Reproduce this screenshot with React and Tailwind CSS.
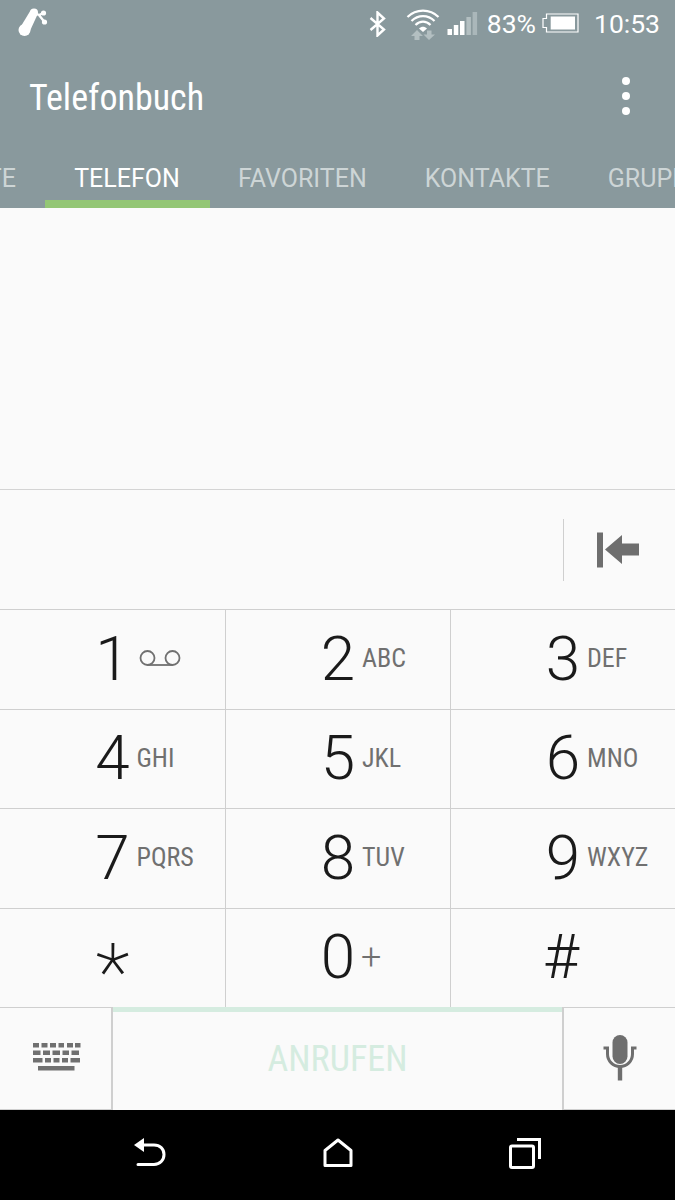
const F = { fontFamily: "Roboto, 'Liberation Sans', sans-serif" };

function Logo() {
  return (
    <svg width="32" height="32" viewBox="0 0 32 32" fill="none" className="block">
      <path d="M16 5 L21 7 L26.5 14 M21 7 L25.5 5" stroke="#fff" strokeWidth="2.4" strokeLinecap="round" />
      <path d="M2.5 19 L12.5 2.5 L19.5 6.5 L11 25 Z" fill="#fff" />
      <circle cx="6.5" cy="22" r="6" fill="#fff" />
      <circle cx="16" cy="4.5" r="4" fill="#fff" />
      <circle cx="25.5" cy="5" r="2.6" fill="#fff" />
      <circle cx="26.5" cy="14" r="2.6" fill="#fff" />
    </svg>
  );
}

function Bluetooth() {
  return (
    <svg width="18" height="26" viewBox="0 0 18 26" fill="none" className="block">
      <path d="M1.5 7 L15 18.5 L8.5 24.5 V1.5 L15 7.5 L1.5 19" stroke="#fff" strokeWidth="2.4" strokeLinejoin="miter" />
    </svg>
  );
}

function Wifi() {
  return (
    <svg width="34" height="34" viewBox="0 0 34 34" fill="none" className="block">
      <path d="M1.5 10 C10 1.5 24 1.5 32.5 10" stroke="#fff" strokeWidth="2.2" />
      <path d="M5.5 14 C12 7.5 22 7.5 28.5 14" stroke="#fff" strokeWidth="2.2" />
      <path d="M9.5 18 C14 13.5 20 13.5 24.5 18" stroke="#fff" strokeWidth="2.2" />
      <path d="M13 21.5 C15.5 19 18.5 19 21 21.5 L17 25 Z" fill="#fff" />
      <path d="M11 23 L17 29 H13.5 V33 H8.5 V29 H5 Z" fill="#b3bfc1" />
      <path d="M23 33 L17.5 27.5 H21 V23.5 H25.5 V27.5 H29 Z" fill="#b3bfc1" />
    </svg>
  );
}

function Signal() {
  return (
    <svg width="31" height="24" viewBox="0 0 31 24" className="block">
      <rect x="0.5" y="17" width="4.5" height="6" fill="#fff" />
      <rect x="6.8" y="13" width="4.5" height="10" fill="#fff" />
      <rect x="13" y="9" width="4.5" height="14" fill="#fff" />
      <rect x="19.4" y="5" width="4.5" height="18" fill="#b3bfc1" />
      <rect x="25.6" y="0" width="4.5" height="23" fill="#aab7ba" />
    </svg>
  );
}

function Battery() {
  return (
    <svg width="37" height="20" viewBox="0 0 37 20" fill="none" className="block">
      <path d="M4.5 1 H36 V19 H4.5 V14.5 H1 V5.5 H4.5 Z" stroke="#fff" strokeWidth="1.2" />
      <rect x="8.7" y="3.5" width="24.3" height="13" fill="#fff" />
    </svg>
  );
}

function Backspace() {
  return (
    <svg width="42" height="36" viewBox="0 0 42 36" className="block">
      <rect x="0" y="0.5" width="6" height="35" fill="#6e6e6e" />
      <path d="M8 17.5 L25 3 V11.5 H42 V23.5 H25 V32 Z" fill="#6e6e6e" />
    </svg>
  );
}

function Voicemail() {
  return (
    <svg width="42" height="18" viewBox="0 0 42 18" fill="none" className="block">
      <circle cx="8.5" cy="9" r="7" stroke="#707070" strokeWidth="1.8" />
      <circle cx="33.5" cy="9" r="7" stroke="#707070" strokeWidth="1.8" />
      <path d="M8.5 16 H33.5" stroke="#707070" strokeWidth="1.8" />
    </svg>
  );
}

function Keyboard() {
  const rows = [
    { y: 0, keys: [[0, 6], [8.5, 6], [17, 6], [25.5, 5.5], [34, 6], [42, 5.5]] },
    { y: 7.5, keys: [[0, 7.5], [10, 7], [19.5, 7.5], [29.5, 6.5], [38.5, 7.5]] },
    { y: 15, keys: [[0, 9.5], [12, 6], [20.5, 6], [29, 6], [37.5, 9.5]] },
  ];
  return (
    <svg width="48" height="28" viewBox="0 0 48 28" className="block">
      {rows.map((r) => r.keys.map(([x, w]) => <rect key={`${r.y}-${x}`} x={x} y={r.y} width={w} height="4.5" fill="#707070" />))}
      <rect x="5" y="23" width="36.5" height="4.5" fill="#707070" />
    </svg>
  );
}

function Mic() {
  return (
    <svg width="34" height="46" viewBox="0 0 34 46" fill="none" className="block">
      <rect x="9.5" y="0" width="15" height="29" rx="7.5" fill="#6e6e6e" />
      <path d="M0.5 13 H4.5 V19 C4.5 26 10 31.5 17 31.5 C24 31.5 29.5 26 29.5 19 V13 H33.5" stroke="#6e6e6e" strokeWidth="3" />
      <rect x="14.8" y="31" width="4.4" height="14.5" fill="#6e6e6e" />
    </svg>
  );
}

function BackNav() {
  return (
    <svg width="34" height="32" viewBox="0 0 34 32" fill="none" className="block">
      <path d="M1 8 L11 1 V15 Z" fill="#fff" />
      <path d="M9 8 H21 C27 8 31 12 31 17.5 C31 23 27 27.5 21 27.5 H5" stroke="#fff" strokeWidth="3" strokeLinecap="round" />
    </svg>
  );
}

function HomeNav() {
  return (
    <svg width="30" height="30" viewBox="0 0 30 30" fill="none" className="block">
      <path d="M2 27.5 V12.5 L15 2 L28 12.5 V27.5 Z" stroke="#fff" strokeWidth="3" strokeLinejoin="round" />
    </svg>
  );
}

function RecentNav() {
  return (
    <svg width="32" height="31" viewBox="0 0 32 31" fill="none" className="block">
      <rect x="1.5" y="8" width="23" height="21.5" rx="1.5" stroke="#fff" strokeWidth="3" />
      <path d="M8 1.5 H30.5 V21" stroke="#fff" strokeWidth="3" />
    </svg>
  );
}

function Key({
  digit,
  label,
  icon,
  border,
  digitClass = "text-[62px] font-light pb-[2px]",
  labelClass = "text-[26px] [font-stretch:75%] pb-[3px]",
}) {
  return (
    <div className={`grid grid-cols-[1fr_48px_1fr] items-center h-full ${border ? "border-r border-[#cfcfcf]" : ""}`}>
      <div />
      <div className={`flex justify-center text-[#1a1a1a] leading-none ${digitClass}`}>{digit}</div>
      <div className={`leading-none text-[#707070] whitespace-nowrap ${labelClass}`}>
        {icon ? <div className="ml-[2px]">{icon}</div> : label}
      </div>
    </div>
  );
}

const rows = [
  [{ digit: "1", icon: <Voicemail /> }, { digit: "2", label: "ABC" }, { digit: "3", label: "DEF" }],
  [{ digit: "4", label: "GHI" }, { digit: "5", label: "JKL" }, { digit: "6", label: "MNO" }],
  [{ digit: "7", label: "PQRS" }, { digit: "8", label: "TUV" }, { digit: "9", label: "WXYZ" }],
  [
    { digit: "*", digitClass: "text-[80px] font-extralight translate-y-[15px]" },
    { digit: "0", label: "+", labelClass: "text-[36px] font-light -ml-[1px] pb-[2px]" },
    { digit: "#", digitClass: "text-[62px] font-light -translate-x-[2px] -translate-y-[1px]" },
  ],
];
const rowH = ["h-[100px]", "h-[99px]", "h-[100px]", "h-[99px]"];

export default function App() {
  return (
    <div style={F} className="w-[675px] h-[1200px] overflow-hidden flex flex-col bg-[#fafafa]">
      <header className="bg-[#89999d] text-white">
        <div className="h-[48px] flex items-center pl-[18px] pr-[15px]">
          <Logo />
          <div className="ml-auto flex items-center">
            <Bluetooth />
            <div className="ml-[19px]"><Wifi /></div>
            <div className="ml-[7px] -mt-[1px]"><Signal /></div>
            <span className="ml-[9px] text-[26.5px] leading-none">83%</span>
            <div className="ml-[6px] -mt-[3px]"><Battery /></div>
            <span className="ml-[15px] text-[26.5px] leading-none">10:53</span>
          </div>
        </div>
        <div className="h-[98px] flex items-center justify-between pl-[29px] pr-[45px]">
          <h1 className="text-[36px] font-normal leading-none [font-stretch:75%] pt-[2px]">Telefonbuch</h1>
          <div className="flex flex-col gap-[7px] pb-[2px]">
            <span className="w-[8px] h-[8px] rounded-full bg-white" />
            <span className="w-[8px] h-[8px] rounded-full bg-white" />
            <span className="w-[8px] h-[8px] rounded-full bg-white" />
          </div>
        </div>
        <nav className="h-[62px] flex items-stretch overflow-hidden text-[25px] leading-none whitespace-nowrap text-[#cdd5d6]">
          <div className="w-[45px] shrink-0 flex items-center justify-end pr-[29px] pt-[3px]">TE</div>
          <div className="w-[165px] shrink-0 flex items-center justify-center text-white border-b-[8px] border-[#93c675] pt-[11px] pr-[1px]">TELEFON</div>
          <div className="pl-[28px] shrink-0 flex items-center pt-[3px]">FAVORITEN</div>
          <div className="pl-[58px] shrink-0 flex items-center pt-[3px]">KONTAKTE</div>
          <div className="pl-[58px] shrink-0 flex items-center pt-[3px]">GRUPPEN</div>
        </nav>
      </header>

      <main className="flex-1 flex flex-col">
        <div className="h-[282px] border-b border-[#d4d4d4]" />
        <div className="h-[119px] flex justify-end items-center">
          <div className="h-[62px] w-[112px] border-l border-[#cfcfcf] flex items-center justify-end pr-[36px]">
            <Backspace />
          </div>
        </div>
        <div className="border-t border-[#cfcfcf]">
          {rows.map((row, i) => (
            <div key={i} className={`grid grid-cols-[226px_225px_224px] border-b border-[#cfcfcf] ${rowH[i]}`}>
              {row.map((k, j) => <Key key={k.digit} {...k} border={j < 2} />)}
            </div>
          ))}
        </div>
        <div className="flex-1 flex">
          <div className="w-[113px] border-r-2 border-b border-[#cfcfcf] flex items-center justify-center pl-[2px] pb-[3px]">
            <Keyboard />
          </div>
          <div className="flex-1 flex flex-col">
            <div className="h-[5px] -mt-[1px] bg-[#d5ece0]" />
            <div className="flex-1 flex items-center justify-center text-[36px] leading-none [font-stretch:75%] text-[#d5ece0] pb-[4px]">ANRUFEN</div>
          </div>
          <div className="w-[113px] border-l-2 border-b border-[#cfcfcf] flex items-center justify-center pb-[1px]">
            <Mic />
          </div>
        </div>
      </main>

      <footer className="h-[90px] bg-black grid grid-cols-[300px_75px_300px] items-center pb-[4px]">
        <div className="flex justify-end"><div className="mr-[133px]"><BackNav /></div></div>
        <div className="flex justify-center"><HomeNav /></div>
        <div className="flex justify-start pl-[134px]"><RecentNav /></div>
      </footer>
    </div>
  );
}
